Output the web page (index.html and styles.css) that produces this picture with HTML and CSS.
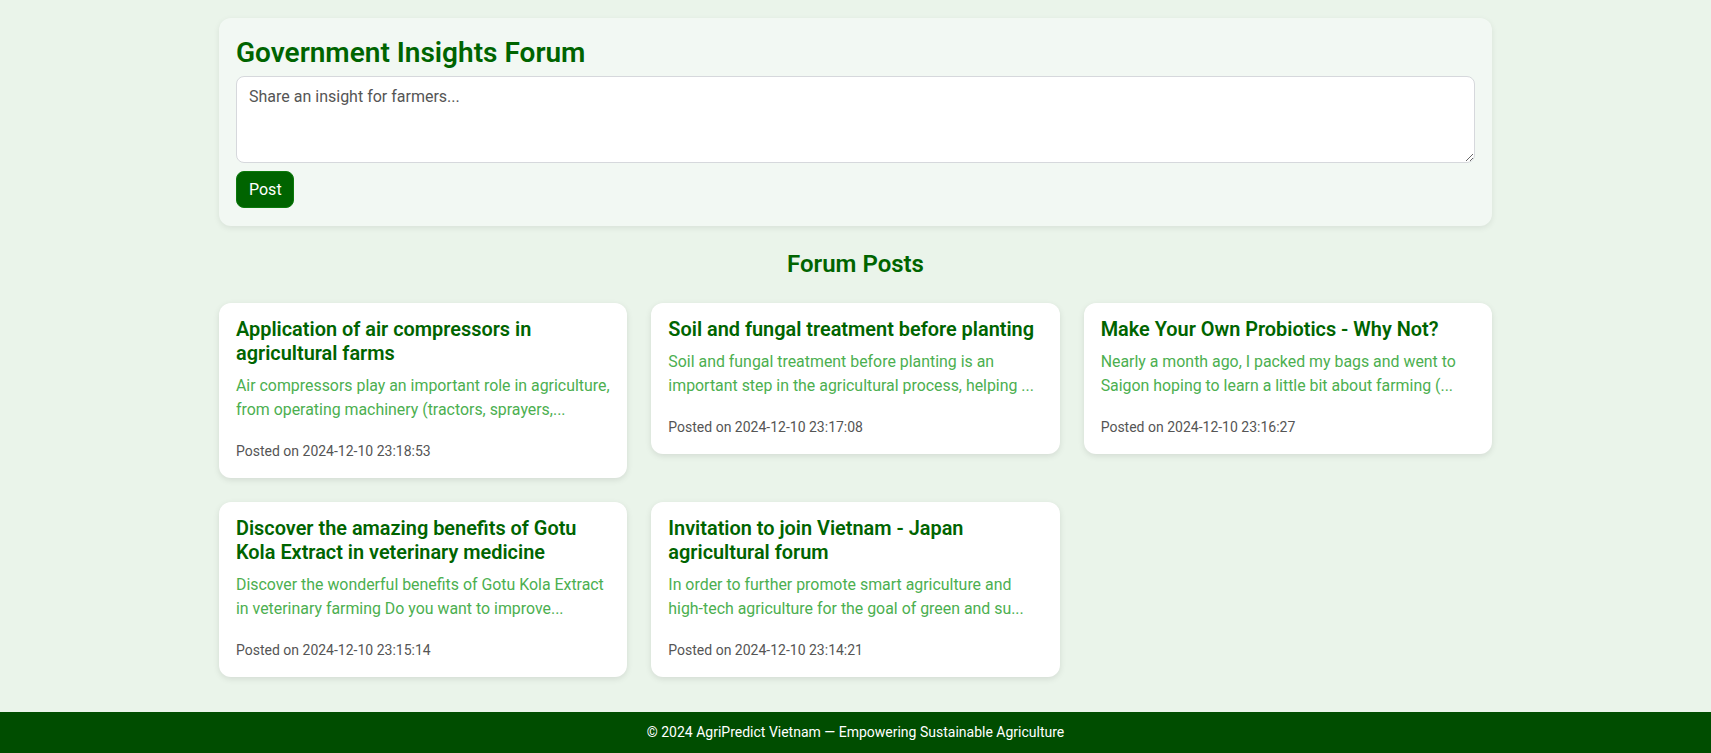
FILE: index.html
```html
<!DOCTYPE html>
<html lang="en">
<head>
<meta charset="utf-8">
<title>Government Insights Forum</title>
<link rel="stylesheet" href="styles.css">
</head>
<body>
<main class="page">
  <section class="composer">
    <h1 class="composer-title">Government Insights Forum</h1>
    <textarea class="composer-input" placeholder="Share an insight for farmers..."></textarea>
    <button class="post-btn">Post</button>
  </section>

  <h2 class="section-title">Forum Posts</h2>

  <div class="posts">
    <article class="post">
      <h3 class="post-title">Application of air compressors in agricultural farms</h3>
      <p class="post-body">Air compressors play an important role in agriculture, from operating machinery (tractors, sprayers,...</p>
      <p class="post-date">Posted on 2024-12-10 23:18:53</p>
    </article>
    <article class="post">
      <h3 class="post-title">Soil and fungal treatment before planting</h3>
      <p class="post-body">Soil and fungal treatment before planting is an important step in the agricultural process, helping ...</p>
      <p class="post-date">Posted on 2024-12-10 23:17:08</p>
    </article>
    <article class="post">
      <h3 class="post-title">Make Your Own Probiotics - Why Not?</h3>
      <p class="post-body">Nearly a month ago, I packed my bags and went to Saigon hoping to learn a little bit about farming (...</p>
      <p class="post-date">Posted on 2024-12-10 23:16:27</p>
    </article>
    <article class="post">
      <h3 class="post-title">Discover the amazing benefits of Gotu Kola Extract in veterinary medicine</h3>
      <p class="post-body">Discover the wonderful benefits of Gotu Kola Extract in veterinary farming Do you want to improve...</p>
      <p class="post-date">Posted on 2024-12-10 23:15:14</p>
    </article>
    <article class="post">
      <h3 class="post-title">Invitation to join Vietnam - Japan agricultural forum</h3>
      <p class="post-body">In order to further promote smart agriculture and high-tech agriculture for the goal of green and su...</p>
      <p class="post-date">Posted on 2024-12-10 23:14:21</p>
    </article>
  </div>
</main>
<footer class="site-footer">© 2024 AgriPredict Vietnam — Empowering Sustainable Agriculture</footer>
</body>
</html>
```

FILE: styles.css
```css
* { box-sizing: border-box; }

html, body {
  margin: 0;
  padding: 0;
}

body {
  background: #eaf4ea;
  font-family: Roboto, "Liberation Sans", sans-serif;
  color: #333;
  min-height: 753px;
  display: flex;
  flex-direction: column;
}

.page {
  width: 1273px;
  margin: 0 auto;
  padding: 18px 0 34px;
  flex: 1;
}

.composer {
  background: #f2f8f3;
  border-radius: 12px;
  box-shadow: 0 2px 6px rgba(0, 0, 0, 0.08);
  padding: 18px 17px 18px 17px;
  display: flex;
  flex-direction: column;
  align-items: flex-start;
}

.composer-title {
  margin: 0 0 6px;
  font-size: 28px;
  font-weight: 600;
  color: #006400;
  line-height: 34px;
}

.composer-input {
  width: 100%;
  height: 87px;
  border: 1px solid #d6d8dc;
  border-radius: 8px;
  padding: 10px 12px;
  font-family: Roboto, "Liberation Sans", sans-serif;
  font-size: 16px;
  color: #333;
  background: #fff;
  resize: vertical;
  margin: 0 0 8px;
}

.composer-input::placeholder {
  color: #555;
}

.post-btn {
  background: #006400;
  color: #fff;
  border: 1px solid #0b7a0b;
  border-radius: 8px;
  font-family: Roboto, "Liberation Sans", sans-serif;
  font-size: 16px;
  padding: 0 12px;
  height: 37px;
  width: 58px;
  cursor: pointer;
}

.section-title {
  text-align: center;
  color: #006400;
  font-size: 24px;
  font-weight: 600;
  margin: 24px 0 25px;
  line-height: 28px;
}

.posts {
  display: grid;
  grid-template-columns: repeat(3, 1fr);
  gap: 24px;
  align-items: start;
}

.post {
  background: #fff;
  border-radius: 12px;
  box-shadow: 0 2px 6px rgba(0, 0, 0, 0.1);
  padding: 15px 16px 15px 17px;
}

.post-title {
  margin: 0 0 8px;
  font-size: 19.9px;
  font-weight: 600;
  line-height: 24px;
  color: #006400;
}

.post-body {
  margin: 0 0 17px;
  font-size: 15.9px;
  line-height: 24px;
  color: #4caf50;
}

.post-date {
  margin: 0;
  font-size: 14px;
  line-height: 24px;
  color: #555;
}

.site-footer {
  background: #004d00;
  color: #fff;
  text-align: center;
  font-size: 14px;
  height: 41px;
  line-height: 41px;
}
```
